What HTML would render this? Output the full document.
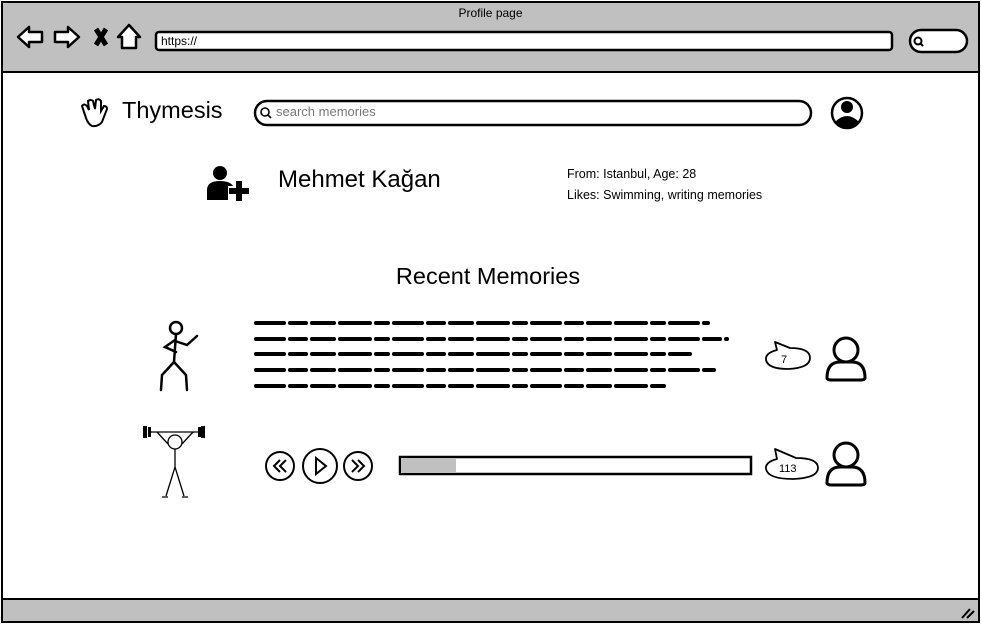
<!DOCTYPE html>
<html><head><meta charset="utf-8"><style>
body{margin:0;width:981px;height:627px;background:#fff;position:relative;overflow:hidden;font-family:"Liberation Sans",sans-serif}
.a{position:absolute}
</style></head><body>
<svg class="a" style="left:0;top:0" width="981" height="627">
<rect x="2" y="2" width="977" height="620" fill="#fff" stroke="#000" stroke-width="2"/>
<rect x="2" y="2" width="977" height="70" fill="#c0c0c0" stroke="#000" stroke-width="2"/>
<rect x="2" y="599" width="977" height="23" fill="#c0c0c0" stroke="#000" stroke-width="2"/>
<path d="M962 618 L970 609 M967 618 L974 611" stroke="#000" stroke-width="2"/>
<path d="M18 37 L29 27 L29 32 L42 32 L42 42 L29 42 L29 47 Z" fill="#fff" stroke="#000" stroke-width="2.5" stroke-linejoin="round"/>
<path d="M79 37 L68 27 L68 32 L55 32 L55 42 L68 42 L68 47 Z" fill="#fff" stroke="#000" stroke-width="2.5" stroke-linejoin="round"/>
<path d="M96 29 L106 45 M106 29 L96 45" stroke="#000" stroke-width="5"/>
<path d="M129 25 L140 37 L136 37 L136 48 L122 48 L122 37 L118 37 Z" fill="#fff" stroke="#000" stroke-width="2.5" stroke-linejoin="round"/>
<rect x="156" y="32" width="736" height="18" rx="3" fill="#fff" stroke="#000" stroke-width="2.5"/>
<rect x="910" y="30" width="57" height="22" rx="11" fill="#fff" stroke="#000" stroke-width="2.5"/>
<circle cx="918" cy="41" r="3.5" fill="none" stroke="#000" stroke-width="2"/><path d="M920 43 L923 46" stroke="#000" stroke-width="2"/>
<rect x="255" y="101" width="556" height="24" rx="12" fill="#fff" stroke="#000" stroke-width="2.5"/>
<circle cx="265" cy="112" r="4" fill="none" stroke="#000" stroke-width="1.6"/><path d="M268 115 L271 118" stroke="#000" stroke-width="1.6"/>
<path d="M86 118 L82 106 Q84 103 87 106 L89 110 L88 101 Q91 99 93 101 L95 109 L96 100 Q99 98 101 101 L101 111 L104 106 Q107 106 107 109 L102 122 Q98 127 92 126 Q88 124 86 118 Z" fill="#fff" stroke="#000" stroke-width="2"/>
<circle cx="847" cy="113" r="15" fill="#fff" stroke="#000" stroke-width="2.5"/>
<circle cx="847" cy="107" r="6" fill="#000"/>
<path d="M835 122 Q847 110 859 122 Q853 128 847 128 Q841 128 835 122 Z" fill="#000"/>
<circle cx="220" cy="173" r="7" fill="#000"/>
<path d="M207 200 L207 190 Q207 181 220 181 Q230 181 233 186 L228 186 L228 200 Z" fill="#000"/>
<rect x="236" y="181" width="6" height="20" fill="#000"/><rect x="229" y="188" width="20" height="6" fill="#000"/>
<g fill="none" stroke="#000" stroke-width="2.5" stroke-linecap="round">
<circle cx="176" cy="328" r="6"/>
<path d="M176 334 L174 362 M174 362 L162 375 L161 390 M174 362 L186 375 L187 390 M175 340 L165 347 L176 352 M175 341 L187 345 L197 336"/>
</g>
<g fill="none" stroke="#000" stroke-width="1.3">
<path d="M150 432 L199 432"/>
<path d="M157 432 L168 444 M193 432 L182 444"/>
<circle cx="175" cy="442" r="7" fill="#fff"/>
<path d="M175 449 L175 467 L166 496 M175 467 L184 496 M162 497 L168 497 M182 497 L188 497"/>
</g>
<rect x="143" y="426" width="4" height="12" fill="#000"/><rect x="148" y="427" width="3" height="10" fill="#000"/>
<rect x="201" y="426" width="4" height="12" fill="#000"/><rect x="198" y="427" width="3" height="10" fill="#000"/>
<g stroke="#000" stroke-width="4" stroke-linecap="round" stroke-dasharray="28 6 16 6 22 6 30 6 12 6">
<path d="M256 323 L708 323"/>
<path d="M256 339 L727 339"/>
<path d="M256 354 L690 354"/>
<path d="M256 370 L714 370"/>
<path d="M256 386 L664 386"/>
</g>
<g fill="#fff" stroke="#000" stroke-width="2">
<circle cx="280" cy="466" r="14"/><circle cx="320" cy="466" r="17"/><circle cx="358" cy="466" r="14"/>
</g>
<path d="M280 460 L274 466 L280 472 M286 460 L280 466 L286 472" fill="none" stroke="#000" stroke-width="2"/>
<path d="M316 458 L326 466 L316 474 Z" fill="none" stroke="#000" stroke-width="2"/>
<path d="M352 460 L358 466 L352 472 M358 460 L364 466 L358 472" fill="none" stroke="#000" stroke-width="2"/>
<rect x="400" y="457" width="351" height="17" fill="#fff" stroke="#000" stroke-width="2.5"/>
<rect x="401" y="458" width="55" height="15" fill="#c0c0c0"/>
<path d="M775 342 L777 350 Q765 353 766 360 Q768 369 788 369 Q810 368 810 358 Q810 348 790 348 L775 342 Z" fill="#fff" stroke="#000" stroke-width="1.8" stroke-linejoin="round"/>
<path d="M775 449 L777 459 Q765 462 766 469 Q768 479 793 479 Q818 478 818 468 Q818 458 796 458 L775 449 Z" fill="#fff" stroke="#000" stroke-width="1.8" stroke-linejoin="round"/>
<g fill="#fff" stroke="#000" stroke-width="3">
<circle cx="846" cy="350" r="12"/><path d="M827 378 Q827 362 840 362 L852 362 Q865 362 865 378 Q865 380 860 380 L832 380 Q827 380 827 378 Z"/>
<circle cx="846" cy="455" r="12"/><path d="M827 483 Q827 467 840 467 L852 467 Q865 467 865 483 Q865 485 860 485 L832 485 Q827 485 827 483 Z"/>
</g>
</svg>
<div class="a" style="left:0;width:981px;top:6px;text-align:center;font-size:12px">Profile page</div>
<div class="a" style="left:161px;top:34px;font-size:12px">https://</div>
<div class="a" style="left:122px;top:97px;font-size:23.5px">Thymesis</div>
<div class="a" style="left:276px;top:104px;font-size:13px;color:#777">search memories</div>
<div class="a" style="left:278px;top:166px;font-size:24px">Mehmet Kağan</div>
<div class="a" style="left:567px;top:164px;font-size:12.5px;line-height:21px">From: Istanbul, Age: 28<br>Likes: Swimming, writing memories</div>
<div class="a" style="left:0;width:976px;top:263px;text-align:center;font-size:23.5px">Recent Memories</div>
<div class="a" style="left:781px;top:354px;font-size:11px">7</div>
<div class="a" style="left:779px;top:463px;font-size:11px">113</div>
</body></html>
